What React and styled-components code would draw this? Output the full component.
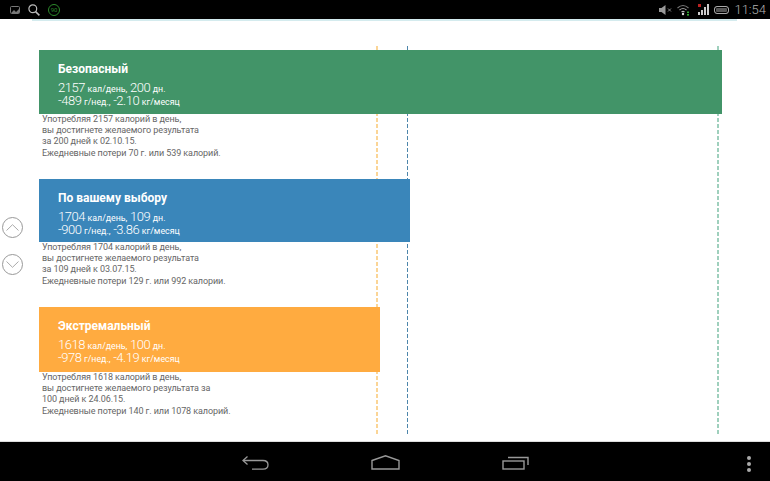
import React from 'react'
import styled, { createGlobalStyle } from 'styled-components'

const plans = [
  {
    title: 'Безопасный',
    color: '#429468',
    width: 683,
    height: 64,
    day: '2157',
    days: '200',
    week: '-489',
    month: '-2.10',
    text: ['Употребляя 2157 калорий в день,', 'вы достигнете желаемого результата', 'за 200 дней к 02.10.15.', 'Ежедневные потери 70 г. или 539 калорий.'],
  },
  {
    title: 'По вашему выбору',
    color: '#3a86ba',
    width: 371,
    height: 63,
    day: '1704',
    days: '109',
    week: '-900',
    month: '-3.86',
    text: ['Употребляя 1704 калорий в день,', 'вы достигнете желаемого результата', 'за 109 дней к 03.07.15.', 'Ежедневные потери 129 г. или 992 калории.'],
  },
  {
    title: 'Экстремальный',
    color: '#ffab40',
    width: 341,
    height: 65,
    day: '1618',
    days: '100',
    week: '-978',
    month: '-4.19',
    text: ['Употребляя 1618 калорий в день,', 'вы достигнете желаемого результата за', '100 дней к 24.06.15.', 'Ежедневные потери 140 г. или 1078 калорий.'],
  },
]

const guides = [
  { x: 376, size: 2, color: '#fbd596' },
  { x: 407, size: 1, color: '#4d86ab' },
  { x: 717, size: 2, color: '#9fd0bd' },
]

export default function App() {
  return (
    <>
      <GlobalStyle />
      <Screen>
        <StatusBar>
          <StatusLeft>
            <svg width="10" height="8" viewBox="0 0 10 8" fill="none">
              <rect x="0.5" y="0.5" width="9" height="7" rx="1" stroke="#777" />
              <path d="M1 7 L4 4 L6 6 L9 3 V7 Z" fill="#777" />
            </svg>
            <svg width="12" height="12" viewBox="0 0 12 12" fill="none">
              <circle cx="4.8" cy="4.8" r="3.9" stroke="#bbb" strokeWidth="1.2" />
              <path d="M7.6 7.6 L11.4 11.4" stroke="#bbb" strokeWidth="1.5" />
            </svg>
            <Badge>90</Badge>
          </StatusLeft>
          <StatusRight>
            <svg width="13" height="10" viewBox="0 0 13 10">
              <path d="M0 3 H2.5 L6.5 0 V10 L2.5 7 H0 Z" fill="#999" />
              <path d="M9 3.5 L12 6.5 M12 3.5 L9 6.5" stroke="#888" strokeWidth="1" />
            </svg>
            <svg width="13" height="12" viewBox="0 0 13 12" fill="none">
              <path d="M0.5 4 Q6 -1 11.5 4" stroke="#777" strokeWidth="1.1" />
              <path d="M2.5 6 Q6 3 9.5 6" stroke="#999" strokeWidth="1.1" />
              <path d="M4.5 8 Q6 6.8 7.5 8" stroke="#bbb" strokeWidth="1.1" />
              <circle cx="6" cy="10" r="1.2" fill="#ddd" />
              <rect x="10" y="7.5" width="2" height="1.6" fill="#3a3" />
              <rect x="10" y="10" width="2" height="1.6" fill="#3a3" />
            </svg>
            <SignalIcon width="11" height="12" viewBox="0 0 11 12">
              <rect x="0" y="0" width="3" height="3" fill="#b22" />
              <rect x="0" y="8" width="2" height="3" fill="#ccc" />
              <rect x="3" y="6" width="2" height="5" fill="#ccc" />
              <rect x="6" y="3" width="2" height="8" fill="#ccc" />
              <rect x="9" y="0" width="2" height="11" fill="#ccc" />
            </SignalIcon>
            <Battery />
            <Clock>11:54</Clock>
          </StatusRight>
        </StatusBar>
        <Content>
          <TopLine />
          {guides.map(g => (
            <Guide key={g.x} $x={g.x} $size={g.size} $color={g.color} />
          ))}
          <Rail>
            <RoundButton>
              <svg width="13" height="7" viewBox="0 0 13 7" fill="none">
                <path d="M0.5 6.5 L6.5 0.7 L12.5 6.5" stroke="#aaa" />
              </svg>
            </RoundButton>
            <RoundButton>
              <svg width="13" height="7" viewBox="0 0 13 7" fill="none">
                <path d="M0.5 0.5 L6.5 6.3 L12.5 0.5" stroke="#aaa" />
              </svg>
            </RoundButton>
          </Rail>
          <Plans>
            {plans.map(p => (
              <Plan key={p.title}>
                <Bar $color={p.color} $width={p.width} $height={p.height}>
                  <Title>{p.title}</Title>
                  <Stats>
                    {p.day} <Unit>кал/день,</Unit> {p.days} <Unit>дн.</Unit>
                  </Stats>
                  <Stats>
                    {p.week} <Unit>г/нед.,</Unit> {p.month} <Unit>кг/месяц</Unit>
                  </Stats>
                </Bar>
                <Description>
                  {p.text.map(line => (
                    <div key={line}>{line}</div>
                  ))}
                </Description>
              </Plan>
            ))}
          </Plans>
        </Content>
        <NavBar>
          <NavIcons>
            <svg width="27" height="14" viewBox="0 0 27 14" fill="none">
              <path d="M5.5 0.5 L1 4.5 L5.5 8.5" stroke="#999" strokeWidth="1.3" />
              <path d="M1.5 4.5 H21 Q26 4.5 26 8.8 Q26 13.2 21 13.2 H10" stroke="#999" strokeWidth="1.3" />
            </svg>
            <svg width="29" height="15" viewBox="0 0 29 15" fill="none">
              <path d="M1 5.5 L14.5 0.8 L28 5.5 V14 H1 Z" stroke="#999" strokeWidth="1.4" />
            </svg>
            <svg width="27" height="14" viewBox="0 0 27 14" fill="none">
              <rect x="1" y="5" width="21" height="8" stroke="#999" strokeWidth="1.4" />
              <path d="M6 1.5 H26 V9" stroke="#999" strokeWidth="1.4" />
            </svg>
          </NavIcons>
          <Dots>
            <Dot />
            <Dot />
            <Dot />
          </Dots>
        </NavBar>
      </Screen>
    </>
  )
}

const GlobalStyle = createGlobalStyle`
  html, body {
    margin: 0;
    padding: 0;
    background: #000;
  }
  body {
    font-family: Roboto, "Noto Sans", sans-serif;
  }
`

const Screen = styled.div`
  width: 770px;
  height: 481px;
  display: flex;
  flex-direction: column;
  overflow: hidden;
`

const StatusBar = styled.div`
  height: 19px;
  flex: none;
  background: #000;
  display: flex;
  align-items: center;
  justify-content: space-between;
  padding: 0 4px 0 10px;
`

const StatusLeft = styled.div`
  display: flex;
  align-items: center;
  gap: 8px;
`

const StatusRight = styled.div`
  display: flex;
  align-items: center;
  gap: 5px;
`

const SignalIcon = styled.svg`
  margin-left: 3px;
`

const Badge = styled.div`
  width: 10px;
  height: 10px;
  border: 1px solid #2c8a2c;
  border-radius: 50%;
  color: #2c8a2c;
  font-size: 6px;
  line-height: 10px;
  text-align: center;
`

const Battery = styled.div`
  width: 13px;
  height: 6px;
  border: 1.5px solid #aaa;
  border-radius: 3px;
  background: #555;
  box-shadow: inset 0 0 0 1px #000;
`

const Clock = styled.div`
  color: #b0b0b0;
  font-size: 13px;
  font-weight: 300;
  line-height: 19px;
`

const Content = styled.div`
  position: relative;
  flex: 1;
  background: #fff;
  display: flex;
`

const TopLine = styled.div`
  position: absolute;
  top: 0;
  left: 32px;
  width: 705px;
  height: 2px;
  background: #d4ebee;
`

const Guide = styled.div`
  position: absolute;
  top: 27px;
  bottom: 5px;
  left: ${props => props.$x}px;
  width: ${props => props.$size}px;
  background: repeating-linear-gradient(
    to bottom,
    ${props => props.$color} 0 4px,
    transparent 4px 6px
  );
`

const Rail = styled.div`
  width: 39px;
  flex: none;
  padding: 198px 0 0 2px;
  box-sizing: border-box;
  display: flex;
  flex-direction: column;
  gap: 16px;
`

const RoundButton = styled.div`
  width: 21px;
  height: 21px;
  box-sizing: border-box;
  border: 1px solid #999;
  border-radius: 50%;
  display: flex;
  align-items: center;
  justify-content: center;
`

const Plans = styled.div`
  position: relative;
  padding-top: 31px;
  display: flex;
  flex-direction: column;
  gap: 15px;
`

const Plan = styled.div`
  display: flex;
  flex-direction: column;
`

const Bar = styled.div`
  width: ${props => props.$width}px;
  height: ${props => props.$height}px;
  background: ${props => props.$color};
  box-sizing: border-box;
  padding: 11px 0 0 19px;
  color: #fff;
`

const Title = styled.div`
  font-size: 12px;
  font-weight: 700;
  line-height: 16px;
  margin-bottom: 4px;
`

const Stats = styled.div`
  font-size: 13px;
  font-weight: 300;
  line-height: 13px;
  letter-spacing: -0.5px;
`

const Unit = styled.span`
  font-size: 8.8px;
  font-weight: 400;
  letter-spacing: 0;
  line-height: 0;
`

const Description = styled.div`
  padding: 0 0 0 3px;
  color: #666;
  font-size: 9px;
  letter-spacing: -0.08px;
  line-height: 11.2px;
  height: 50px;
`

const NavBar = styled.div`
  position: relative;
  height: 40px;
  flex: none;
  background: #000;
  border-top: 1px solid #ddd;
  box-sizing: border-box;
  padding-top: 2px;
  display: flex;
  align-items: center;
  justify-content: center;
`

const NavIcons = styled.div`
  display: flex;
  align-items: center;
  gap: 102px;
`

const Dots = styled.div`
  position: absolute;
  right: 19px;
  top: 14px;
  display: flex;
  flex-direction: column;
  gap: 2px;
`

const Dot = styled.div`
  width: 4px;
  height: 4px;
  border-radius: 50%;
  background: #aaa;
`
